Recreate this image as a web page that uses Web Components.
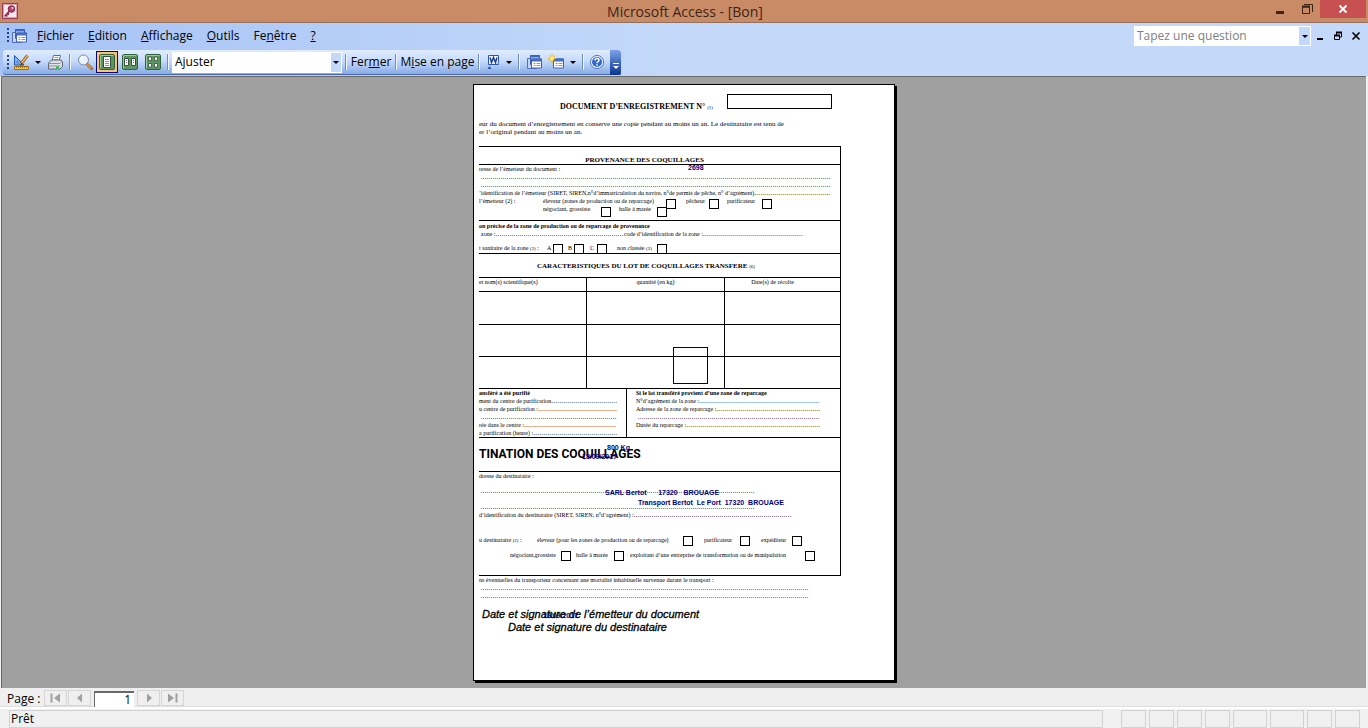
<!DOCTYPE html>
<html lang="fr">
<head>
<meta charset="utf-8">
<title>Microsoft Access - [Bon]</title>
<style>
html, body { margin: 0; height: 100%; }
body { font: 12px/16px "Open Sans", "Noto Sans", sans-serif; color: #000; background: #efefef; }
</style>
</head>
<body>
<app-window></app-window>
<script>
const define = (name, html, setup) => {
  const tpl = document.createElement('template');
  tpl.innerHTML = html;
  customElements.define(name, class extends HTMLElement {
    connectedCallback() {
      if (this.shadowRoot) return;
      this.attachShadow({ mode: 'open' }).append(tpl.content.cloneNode(true));
      if (setup) setup(this, this.shadowRoot);
    }
  });
};

/* ---------- icons ---------- */
const sheet = (x, y) => `<path d="M${x} ${y}h10v9H${x}z" fill="#fff" stroke="#3d62b5"/><path d="M${x} ${y}h10v2H${x}z" fill="#4a7be0" stroke="#3d62b5"/><path d="M${x + 2} ${y + 4.5}h2M${x + 5} ${y + 4.5}h4M${x + 2} ${y + 6.5}h2M${x + 5} ${y + 6.5}h4" stroke="#7c97d4"/>`;
const greenBox = '<rect x=".5" y=".5" width="15" height="15" rx="1.500" fill="#5d9562" stroke="#2f6238"/><path d="M1.500 14.500v-13h13" fill="none" stroke="#9cc79c"/>';
const icons = {
  key: '<rect x=".5" y=".5" width="15" height="15" fill="#f7e9ee" stroke="#9a3c56"/><rect x="1.500" y="1.500" width="13" height="13" fill="none" stroke="#d9a3b4"/><circle cx="9.500" cy="6" r="3.300" fill="#b5476a" stroke="#7b2343"/><circle cx="10.500" cy="5" r="1" fill="#f7dbe4"/><path d="M7.500 8L3.500 12.500l2 .3M5.500 10.500l1.500 1" stroke="#8c2d4e" stroke-width="1.800" fill="none"/>',
  form: `<path d="M1.500 4.500h9v10h-9z" fill="#c5d3f2" stroke="#5271b5"/><path d="M4.500 1.500h9v9h-9z" fill="#dfe8fb" stroke="#3d62b5"/><path d="M4.500 1.500h9v1.500h-9z" fill="#3d6fdc" stroke="#3d62b5"/>${sheet(5.5, 5)}`,
  design: '<path d="M1.500 1.500v9.500h9.500z" fill="#7fb0ee" stroke="#245ab8"/><path d="M4 7v2h2z" fill="#fff" stroke="#245ab8" stroke-width=".6"/><path d="M14.500 1.500L8 10" stroke="#8a5a26" stroke-width="3"/><path d="M14.500 1.500L8 10" stroke="#edb25c" stroke-width="1.500"/><path d="M8.500 8.500L7 12l2.500-2z" fill="#222"/><path d="M1.500 12.500h14v3h-14z" fill="#f7c64b" stroke="#a36d12"/><path d="M3.500 12.500v1.500M5.500 12.500v1.500M7.500 12.500v1.500M9.500 12.500v1.500M11.500 12.500v1.500M13.500 12.500v1.500" stroke="#8a5a12" stroke-width=".7"/>',
  print: '<path d="M5 7l1.500-5.500h7L12 7z" fill="#fff" stroke="#5f6d86"/><path d="M7.500 3.500h4M7 5.500h4" stroke="#8b9bb8"/><path d="M1.500 9l3-3h9.500l1.500 1.500v5l-2.500 2.500h-11.500z" fill="#dde0e6" stroke="#5c6474"/><path d="M1.500 9.500h11.500l2.500-2.500M1.500 12h11.500" stroke="#8a91a0" fill="none"/><path d="M9 13.500h3" stroke="#18c62c" stroke-width="2"/>',
  lens: '<path d="M10.500 10.500l4 4" stroke="#8a5a22" stroke-width="3" stroke-linecap="round"/><path d="M10.500 10.500l3.700 3.700" stroke="#e0a04a" stroke-width="1.600" stroke-linecap="round"/><circle cx="6.500" cy="6" r="5" fill="#e9f1fb" stroke="#7f8797"/><path d="M3.500 6a3 3 0 0 1 3-3" stroke="#fff" fill="none" stroke-width="1.300"/>',
  page1: `${greenBox}<path d="M4.500 2.500h7v11h-7z" fill="#fff" stroke="#33503a"/><path d="M6 5.500h4M6 7.500h4M6 9.500h4M6 11.500h4" stroke="#8c8c8c"/>`,
  page2: `${greenBox}<path d="M2.500 4.500h4v7h-4zM9.500 4.500h4v7h-4z" fill="#fff" stroke="#33503a"/><path d="M4 6.500h1M4 8.500h1M11 6.500h1M11 8.500h1" stroke="#777"/>`,
  page4: `${greenBox}<path d="M3.500 3h3v3.500h-3zM9.500 3h3v3.500h-3zM3.500 9.500h3v3.500h-3zM9.500 9.500h3v3.500h-3z" fill="#fff" stroke="#33503a" stroke-width=".8"/>`,
  word: '<path d="M3.500 1.500h10v9h-10z" fill="#f4f7fe" stroke="#2b55b0"/><path d="M5 3.500l1.500 5 2-5 2 5 1.500-5" fill="none" stroke="#1c3f9a" stroke-width="1.500"/><path d="M11 10l2.500-2.500V10z" fill="#9fb6e8"/><path d="M2.500 15l2-3 2 3z" fill="#2b55b0"/>',
  fresh: `${sheet(5.5, 5)}<path d="M4 0v9M0 4.500h8M1 1.500l6 6M7 1.500l-6 6" stroke="#e8ae17"/><circle cx="4" cy="4.500" r="2" fill="#fff27a"/>`,
  help: '<circle cx="8" cy="8" r="6.500" fill="#fff" stroke="#4c70bd"/><circle cx="8" cy="8" r="5" fill="#2f66cf"/><path d="M6 6.500q0-2 2-2t2 1.700q0 1-1.200 1.700-.8.500-.8 1.400M8 10.300v1.500" fill="none" stroke="#fff" stroke-width="1.400"/>',
  down: '<path d="M5 7h6l-3 3z" fill="#000"/>',
  more: '<path d="M5 7.500h6" stroke="#fff"/><path d="M5 10h6l-3 3z" fill="#fff"/>',
  min: '<path d="M3 11.500h8" stroke="#3b2519" stroke-width="3"/>',
  max: '<path d="M5 3.500h8.500v7.500" fill="none" stroke="#3b2519"/><path d="M3.500 6h7v6.500h-7z" fill="none" stroke="#3b2519"/><path d="M3 5.500h8" stroke="#3b2519" stroke-width="2"/>',
  close: '<path d="M4.500 4.500l7 7M11.500 4.500l-7 7" stroke="#fff" stroke-width="1.800"/>',
  mmin: '<path d="M5 11h6" stroke="#000" stroke-width="2"/>',
  mmax: '<path d="M6.500 7V4.500h5v4.500H10M4.500 7.500h5v4h-5z" fill="none" stroke="#000"/><path d="M6 4.500h6M4 7.500h6" stroke="#000" stroke-width="2"/>',
  mclose: '<path d="M4.500 4.500l7 7M11.500 4.500l-7 7" stroke="#000" stroke-width="1.600"/>',
  first: '<path d="M12 3.500v9L6 8z" fill="#a0a0a0"/><path d="M3.500 3.500v9" stroke="#a0a0a0" stroke-width="2"/>',
  prev: '<path d="M10 3.500v9L5 8z" fill="#a0a0a0"/>',
  next: '<path d="M6 3.500v9L11 8z" fill="#a0a0a0"/>',
  last: '<path d="M3 3.500v9L9 8z" fill="#a0a0a0"/><path d="M11.500 3.500v9" stroke="#a0a0a0" stroke-width="2"/>'
};
define('ui-icon', `<style>:host{display:block;width:16px;height:16px;flex:none}svg{display:block}</style><svg width="16" height="16" viewBox="0 0 16 16" aria-hidden="true"></svg>`,
  (el, root) => { root.querySelector('svg').innerHTML = icons[el.getAttribute('name')]; });

define('tool-button', `<style>
:host{display:flex;flex:none;width:22px;height:22px}
:host([narrow]){width:12px}
button{flex:1;display:flex;align-items:center;justify-content:center;margin:0;padding:0;border:1px solid transparent;background:none;font:inherit;color:inherit;min-width:0;white-space:nowrap}
:host([pressed]) button{border-color:#0a0a6e;background:#fbc277}
</style><button type="button"><slot></slot></button>`,
  (el, root) => root.querySelector('button').setAttribute('aria-label', el.getAttribute('label') || el.textContent));

define('tool-separator', `<style>:host{display:flex;flex:none;width:8px;height:16px;justify-content:center}
i{width:1px;background:#6a8ccb;border-right:1px solid #f1f6ff}</style><i></i>`);

define('drag-grip', `<style>:host{display:block;flex:none;width:3px;height:15px;background:repeating-linear-gradient(#27418b 0 2px,transparent 2px 4px) 0 0/2px 100% no-repeat}</style>`);

/* ---------- window bars ---------- */
define('title-bar', `<style>
:host{display:flex;align-items:flex-start;height:22px;background:#c98b65;border-bottom:1px solid #94705e;color:#3b2519}
.side{flex:1;display:flex}
.left{padding:3px 2px}
h1{margin:0;font:14px/23px "Open Sans",sans-serif}
.right{justify-content:flex-end;align-items:flex-start;padding-right:2px}
button{margin:0;padding:0;border:0;background:none;width:26px;height:18px;display:flex;align-items:center;justify-content:center}
.close{width:46px;background:#c75050}
</style>
<div class="side left"><ui-icon name="key"></ui-icon></div>
<h1>Microsoft Access - [Bon]</h1>
<div class="side right"><button aria-label="Réduire"><ui-icon name="min"></ui-icon></button><button aria-label="Restaurer"><ui-icon name="max"></ui-icon></button><button class="close" aria-label="Fermer"><ui-icon name="close"></ui-icon></button></div>`);

define('menu-bar', `<style>
:host{display:flex;align-items:center;box-sizing:border-box;height:27px;padding:0 3px 2px 7px}
nav{display:flex;gap:14px;margin-left:10px;flex:1}
.doc{margin-left:1px}
a{color:#000;text-decoration:none}
.ask{display:flex;height:20px;width:177px;background:#fff}
input{flex:1;min-width:0;border:0;margin:0;padding:0 3px;font:inherit;background:none}
input::placeholder{color:#808080;opacity:1}
button{margin:0;padding:0;border:0;background:none;display:flex;align-items:center;justify-content:center;width:18px}
.ask button{width:11px;margin:1px;background:#c4d9fa}
</style>
<drag-grip></drag-grip><ui-icon class="doc" name="form"></ui-icon>
<nav><a href="#"><u>F</u>ichier</a><a href="#"><u>E</u>dition</a><a href="#"><u>A</u>ffichage</a><a href="#"><u>O</u>utils</a><a href="#">Fe<u>n</u>être</a><a href="#"><u>?</u></a></nav>
<div class="ask"><input aria-label="Tapez une question" placeholder="Tapez une question"><button aria-label="Questions récentes"><ui-icon name="down"></ui-icon></button></div>
<button aria-label="Réduire le document"><ui-icon name="mmin"></ui-icon></button><button aria-label="Restaurer le document"><ui-icon name="mmax"></ui-icon></button><button aria-label="Fermer le document"><ui-icon name="mclose"></ui-icon></button>`);

define('preview-toolbar', `<style>
:host{display:inline-flex;align-items:center;vertical-align:top;height:24px;margin-left:3px;padding-left:4px;border-radius:3px 0 0 3px;background:linear-gradient(#e0ecfe,#c6dbfa 45%,#86abe6);border-bottom:1px solid #4a6cae}
.pages{display:flex;gap:1px}
.zoom{display:grid;width:170px;height:21px;background:#fff}
select{grid-area:1/1;appearance:none;border:0;margin:0;padding:0 18px 1px 3px;background:none;font:inherit;color:#000}
.zoom i{grid-area:1/1;justify-self:end;pointer-events:none;display:flex;align-items:center;justify-content:center;width:10px;margin:1px;background:#c4d9fa}
.close{width:42px}.setup{width:75px}.link{width:20px}
.end{display:flex;align-items:center;justify-content:center;width:11px;height:25px;margin:0 0 0 3px;padding:4px 0 0;border:0;border-radius:0 3px 3px 0;background:linear-gradient(#7ba2e7,#0a3391)}
</style>
<drag-grip></drag-grip>
<tool-button label="Affichage"><ui-icon name="design"></ui-icon></tool-button><tool-button narrow label="Choix d'affichage"><ui-icon name="down"></ui-icon></tool-button>
<tool-button label="Imprimer"><ui-icon name="print"></ui-icon></tool-button><tool-separator></tool-separator>
<tool-button label="Zoom"><ui-icon name="lens"></ui-icon></tool-button>
<div class="pages"><tool-button pressed label="Une page"><ui-icon name="page1"></ui-icon></tool-button><tool-button label="Deux pages"><ui-icon name="page2"></ui-icon></tool-button><tool-button label="Plusieurs pages"><ui-icon name="page4"></ui-icon></tool-button></div>
<tool-separator></tool-separator>
<div class="zoom"><select aria-label="Zoom"><option>Ajuster</option><option>100%</option></select><i><ui-icon name="down"></ui-icon></i></div>
<tool-separator></tool-separator><tool-button class="close"><span>Fer<u>m</u>er</span></tool-button>
<tool-separator></tool-separator><tool-button class="setup"><span>M<u>i</u>se en page</span></tool-button>
<tool-separator></tool-separator><tool-button class="link" label="Liaisons Office"><ui-icon name="word"></ui-icon></tool-button><tool-button narrow label="Choix de liaison"><ui-icon name="down"></ui-icon></tool-button>
<tool-separator></tool-separator><tool-button label="Fenêtre Base de données"><ui-icon name="form"></ui-icon></tool-button><tool-button label="Nouvel objet"><ui-icon name="fresh"></ui-icon></tool-button><tool-button narrow label="Choix d'objet"><ui-icon name="down"></ui-icon></tool-button>
<tool-separator></tool-separator><tool-button class="link" label="Aide"><ui-icon name="help"></ui-icon></tool-button>
<button class="end" aria-label="Options de barre d'outils"><ui-icon name="more"></ui-icon></button>`);

/* ---------- form pieces ---------- */
/* One printed line; --cols lists its column widths. */
define('doc-line', `<style>
:host{display:grid;grid-template-columns:var(--cols,auto);align-items:start;height:8px;line-height:8px;white-space:nowrap}
:host([bold]){font-weight:bold}
</style><slot></slot>`);

/* Label followed by a run of printed dots. */
define('dot-field', `<style>
:host{display:flex;min-width:0;white-space:nowrap}
.dots{flex:1;min-width:0;overflow:hidden;font-size:8px;color:#222;height:8px}
</style><span><slot>&nbsp;</slot></span><span class="dots"></span>`,
  (el, root) => { root.querySelector('.dots').textContent = '.'.repeat(+el.getAttribute('count')); });

define('tick-box', `<style>
:host{display:block;height:8px}
label{display:flex;justify-content:space-between;white-space:nowrap}
input{appearance:none;flex:none;box-sizing:border-box;width:10px;height:10px;margin:var(--drop,0px) 0 0;border:1px solid #000;background:#fff}
</style><label><span><slot></slot></span><input type="checkbox"></label>`);

define('bon-page', `<style>
:host{display:block;flex:none;position:relative;box-sizing:border-box;width:422px;padding:9px 0 46px 5px;background:#fff;border:1px solid #000;box-shadow:2px 2px #000;font:6px/8px "Liberation Serif",serif;color:#000}
.head{display:flex;height:17px;padding-left:81px}
h2,h3{margin:0;font-size:7px;line-height:8px;text-align:center;white-space:nowrap}
.head h2{font-size:8px;width:167px;text-align:left;padding-top:9px}
small{font-size:5px;font-weight:normal;line-height:0}
.number{box-sizing:border-box;width:105px;height:15px;margin:0;padding:0 2px;border:1px solid #000;font:inherit}
.note{padding-top:9px;font-size:7px}
.form{box-sizing:border-box;width:362px;margin-top:10px;border:1px solid #000;border-left:0}
section{border-bottom:1px solid #000}
section:last-child{border-bottom:0}
.origin{padding:9px 30px 0 0}
.sender{--drop:2px;padding-bottom:7px}
.zone{padding:1px 0}
.class{margin-top:6px}
.lot{padding:8px 27px 7px 0}
table{width:361px;table-layout:fixed;border-spacing:0;border-bottom:1px solid #000}
td,th{padding:0;border-bottom:1px solid #000;border-right:1px solid #000;font-weight:normal;vertical-align:top;height:31px}
th{height:13px}
th:first-child{text-align:left}
th:last-child{padding-right:20px}
td:last-child,th:last-child{border-right:0}
tr:first-child td{height:32px}
tr:last-child td{border-bottom:0}
.two{display:grid;grid-template-columns:148px 1fr}
.left{border-right:1px solid #000;padding-right:9px}
.right{padding:0 20px 0 9px}
.dest{height:33px}
.dest h3{font:bold 12px/32px Roboto,"Open Sans",sans-serif;text-align:left}
.to{padding-bottom:16px}
.address{margin-top:7px}.address2{margin-top:8px}.kind{margin-top:17px}.kind2{margin-top:7px}
.sign{padding:8px 0 0 3px;font:italic 11px/13px "Liberation Sans",sans-serif;-webkit-text-stroke:0.300px #000;white-space:nowrap}
.sign p{margin:0}.sign p + p{padding-left:26px}
/* values printed by the report over the form */
.v{position:absolute;font:bold 7px/8px "Liberation Sans",sans-serif;color:#000080;white-space:pre}
.stamp{position:absolute;left:199px;top:262px;width:33px;height:35px;border:1px solid #000050}
</style>
<div class="head"><h2>DOCUMENT D’ENREGISTREMENT N° <small>(1)</small></h2><input class="number" aria-label="Numéro du document"></div>
<div class="note"><doc-line>eur du document d’enregistrement en conserve une copie pendant au moins un an. Le destinataire est tenu de</doc-line><doc-line>er l’original pendant au moins un an.</doc-line></div>
<div class="form">
<section class="origin"><h3>PROVENANCE DES COQUILLAGES</h3></section>
<section class="sender">
<doc-line>resse de l’émetteur du document :</doc-line>
<doc-line style="--cols:352px"><dot-field count="175"></dot-field></doc-line>
<doc-line style="--cols:352px"><dot-field count="175"></dot-field></doc-line>
<doc-line style="--cols:352px"><dot-field count="38">’identification de l’émetteur (SIRET, SIREN,n°d’immatriculation du navire, n°de permis de pêche, n° d’agrément)</dot-field></doc-line>
<doc-line style="--cols:64px 133px 10px 33px 8px 45px"><span>l’émetteur (2) :</span><tick-box>éleveur (zones de production ou de reparcage)</tick-box><i></i><tick-box>pêcheur</tick-box><i></i><tick-box>purificateur</tick-box></doc-line>
<doc-line style="--cols:64px 68px 8px 48px"><i></i><tick-box>négociant, grossiste</tick-box><i></i><tick-box>halle à marée</tick-box></doc-line>
</section>
<section class="zone">
<doc-line bold>on précise de la zone de production ou de reparcage de provenance</doc-line>
<doc-line style="--cols:2px 143px 179px"><i></i><dot-field count="64">zone :</dot-field><dot-field count="50">code d’identification de la zone :</dot-field></doc-line>
<doc-line class="class" style="--cols:68px 16px 5px 16px 6px 17px 10px 50px"><span>t sanitaire de la zone <small>(2)</small> :</span><tick-box>A</tick-box><i></i><tick-box>B</tick-box><i></i><tick-box>C</tick-box><i></i><tick-box>non classée <small>(2)</small></tick-box></doc-line>
</section>
<section class="lot"><h3>CARACTERISTIQUES DU LOT DE COQUILLAGES TRANSFERE <small>(6)</small></h3></section>
<table><colgroup><col style="width:108px"><col style="width:138px"><col></colgroup>
<thead><tr><th>et nom(s) scientifique(s)</th><th>quantité (en kg)</th><th>Date(s) de récolte</th></tr></thead>
<tbody><tr><td></td><td></td><td></td></tr><tr><td></td><td></td><td></td></tr><tr><td></td><td></td><td></td></tr></tbody></table>
<section class="two">
<div class="left">
<doc-line bold>ansféré a été purifié</doc-line>
<doc-line><dot-field count="33">ment du centre de purification </dot-field></doc-line>
<doc-line><dot-field count="40">u centre de purification :</dot-field></doc-line>
<doc-line><dot-field count="68"></dot-field></doc-line>
<doc-line><dot-field count="46">rée dans le centre :</dot-field></doc-line>
<doc-line><dot-field count="42">a purification (heure) :</dot-field></doc-line>
</div>
<div class="right">
<doc-line bold>Si le lot transféré provient d’une zone de reparcage</doc-line>
<doc-line><dot-field count="60">N°d’agrément de la zone :</dot-field></doc-line>
<doc-line><dot-field count="52">Adresse de la zone de reparcage :</dot-field></doc-line>
<doc-line><dot-field count="91"></dot-field></doc-line>
<doc-line><dot-field count="67">Durée du reparcage :</dot-field></doc-line>
</div>
</section>
<section class="dest"><h3>TINATION DES COQUILLAGES</h3></section>
<section class="to">
<doc-line>dresse du destinataire :</doc-line>
<doc-line class="address" style="--cols:277px"><dot-field count="137"></dot-field></doc-line>
<doc-line class="address2" style="--cols:277px"><dot-field count="137"></dot-field></doc-line>
<doc-line style="--cols:313px"><dot-field count="79">d’identification du destinataire (SIRET, SIREN, n°d’agrément) :</dot-field></doc-line>
<doc-line class="kind" style="--cols:58px 156px 11px 46px 11px 41px"><span>u destinataire <small>(2)</small> :</span><tick-box>éleveur (pour les zones de production ou de reparcage)</tick-box><i></i><tick-box>purificateur</tick-box><i></i><tick-box>expéditeur</tick-box></doc-line>
<doc-line class="kind2" style="--cols:31px 61px 5px 48px 6px 185px"><i></i><tick-box>négociant,grossiste</tick-box><i></i><tick-box>halle à marée</tick-box><i></i><tick-box>exploitant d’une entreprise de transformation ou de manipulation</tick-box></doc-line>
</section>
</div>
<doc-line>ns éventuelles du transporteur concernant une mortalité inhabituelle survenue durant le transport :</doc-line>
<doc-line style="--cols:330px"><dot-field count="164"></dot-field></doc-line>
<doc-line style="--cols:330px"><dot-field count="164"></dot-field></doc-line>
<div class="sign"><p>Date et signature de l’émetteur du document</p><p>Date et signature du destinataire</p></div>
<span class="v" style="left:214px;top:79px">2698</span>
<span class="v" style="left:133px;top:359px">800 Kg</span>
<span class="v" style="left:108px;top:368px">18/09/2017</span>
<span class="v" style="left:131px;top:404px">SARL Bertot      17320   BROUAGE</span>
<span class="v" style="left:164px;top:414px">Transport Bertot  Le Port  17320  BROUAGE</span>
<span class="v" style="left:69px;top:527px">18/09/2017</span>
<div class="stamp"></div>`);

/* ---------- bottom bars ---------- */
define('page-navigator', `<style>
:host{display:flex;align-items:flex-start;height:19px;padding:2px 0 0 7px;background:#efefef;border-bottom:1px solid #dedede;box-sizing:border-box}
label{width:37px;line-height:17px}
button{box-sizing:border-box;width:23px;height:16px;margin:0 1px 0 0;padding:0;border:1px solid #d6d6d6;background:#efefef;display:flex;align-items:center;justify-content:center}
input{box-sizing:border-box;width:40px;height:16px;margin:1px 3px 0 2px;border:1px solid #696969;border-width:2px 0 0 1px;padding:0 3px;text-align:right;font:inherit;background:#fff}
</style>
<label for="n">Page :</label><button aria-label="Première page"><ui-icon name="first"></ui-icon></button><button aria-label="Page précédente"><ui-icon name="prev"></ui-icon></button><input id="n" value="1"><button aria-label="Page suivante"><ui-icon name="next"></ui-icon></button><button aria-label="Dernière page"><ui-icon name="last"></ui-icon></button>`);

define('status-bar', `<style>
:host{display:flex;gap:3px;height:18px;padding:1px 8px 0 9px;background:#f0f0f0;border-top:2px solid #fff}
span{box-sizing:border-box;border:1px solid #d2d2d2;width:25px;height:18px}
.msg{flex:1;margin-right:15px;padding-left:1px}
.wide{width:34px}
</style><span class="msg" role="status">Prêt</span><span></span><span></span><span></span><span></span><span class="wide"></span><span class="wide"></span><span></span><span></span>`);

define('app-window', `<style>
:host{display:flex;flex-direction:column;min-height:100vh}
.bars{background:linear-gradient(90deg,#a6c3f5,#c4d9fa 50%);height:53px}
main{flex:1;display:flex;align-items:flex-start;justify-content:center;margin-right:2px;background:#a0a0a0;border:1px solid #696969;border-width:1px 0 0 1px;margin-left:1px;padding:7px 0 6px}
</style>
<title-bar></title-bar>
<div class="bars"><menu-bar></menu-bar><preview-toolbar></preview-toolbar></div>
<main><bon-page></bon-page></main>
<page-navigator></page-navigator>
<status-bar></status-bar>`);
</script>
</body>
</html>
